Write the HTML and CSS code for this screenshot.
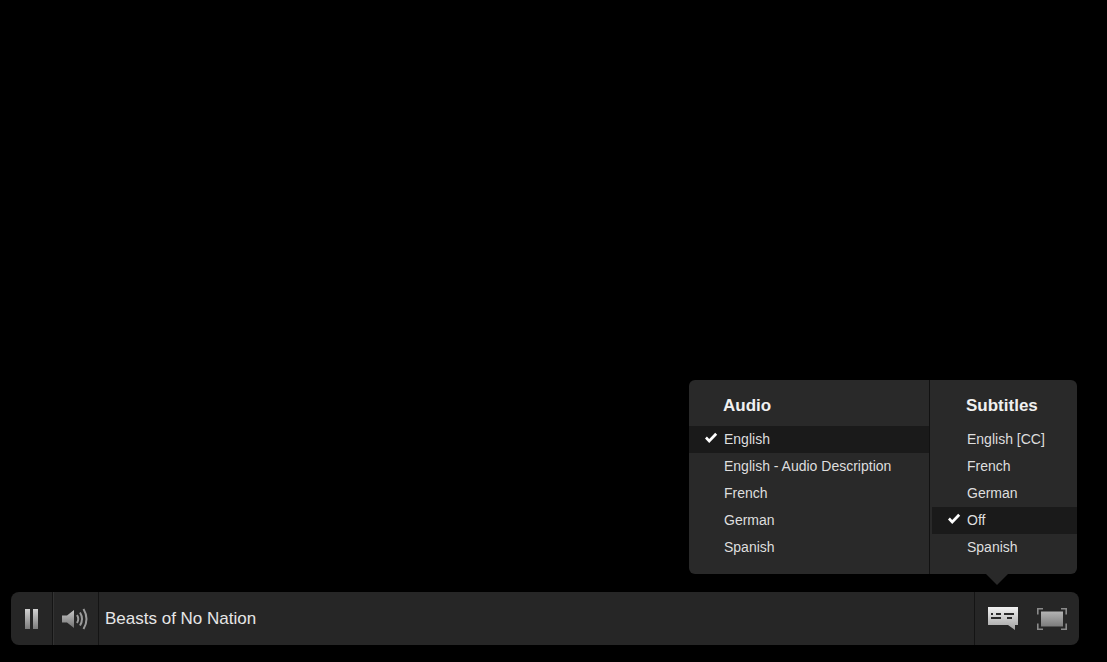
FILE: index.html
```html
<!DOCTYPE html>
<html lang="en">
<head>
<meta charset="utf-8">
<title>Beasts of No Nation</title>
<link rel="stylesheet" href="styles.css">
</head>
<body>
<div class="player">
  <div class="popover">
    <section class="panel panel-audio">
      <h2 class="panel-title">Audio</h2>
      <ul class="list">
        <li class="item selected"><svg class="check" viewBox="0 0 14 12"><path d="M1 6.5 L2.9 4.6 L5.2 6.9 L11.2 .8 L13.2 2.8 L5.2 11 Z"/></svg>English</li>
        <li class="item">English - Audio Description</li>
        <li class="item">French</li>
        <li class="item">German</li>
        <li class="item">Spanish</li>
      </ul>
    </section>
    <section class="panel panel-subs">
      <h2 class="panel-title">Subtitles</h2>
      <ul class="list">
        <li class="item">English [CC]</li>
        <li class="item">French</li>
        <li class="item">German</li>
        <li class="item selected"><svg class="check" viewBox="0 0 14 12"><path d="M1 6.5 L2.9 4.6 L5.2 6.9 L11.2 .8 L13.2 2.8 L5.2 11 Z"/></svg>Off</li>
        <li class="item">Spanish</li>
      </ul>
    </section>
    <div class="arrow"></div>
  </div>
  <div class="bar">
    <button class="ctrl ctrl-pause" aria-label="Pause">
      <svg width="16" height="22" viewBox="0 0 16 22">
        <defs><linearGradient id="g1" x1="0" y1="0" x2="0" y2="1"><stop offset="0" stop-color="#d2d2d2"/><stop offset="1" stop-color="#7c7c7c"/></linearGradient></defs>
        <rect x="1" y="1" width="5" height="20" fill="url(#g1)"/>
        <rect x="9" y="1" width="5" height="20" fill="url(#g1)"/>
      </svg>
    </button>
    <button class="ctrl ctrl-volume" aria-label="Volume">
      <svg width="28" height="24" viewBox="0 0 28 24">
        <defs><linearGradient id="g2" x1="0" y1="0" x2="0" y2="1"><stop offset="0" stop-color="#c8c8c8"/><stop offset="1" stop-color="#707070"/></linearGradient></defs>
        <path d="M0 8.5 H5 L12 3 V21 L5 15.5 H0 Z" fill="url(#g2)"/>
        <g fill="none" stroke="#9a9a9a" stroke-width="2">
          <path d="M15 8 Q17.5 12 15 16"/>
          <path d="M18 5.5 Q22 12 18 18.5"/>
          <path d="M21.5 2 Q27.5 12 21.5 22"/>
        </g>
      </svg>
    </button>
    <div class="title">Beasts of No Nation</div>
    <button class="ctrl ctrl-subs" aria-label="Audio and subtitles">
      <svg width="32" height="24" viewBox="0 0 32 24">
        <defs><linearGradient id="g3" x1="0" y1="0" x2="0" y2="1"><stop offset="0" stop-color="#f2f2f2"/><stop offset="1" stop-color="#a0a0a0"/></linearGradient></defs>
        <path d="M1 0 H31 V18 H28 V23 L21 18 H1 Z" fill="url(#g3)"/>
        <g fill="#2a2a2a">
          <rect x="4" y="10" width="10" height="2"/>
          <rect x="9" y="6" width="5" height="2"/>
          <rect x="4" y="6" width="2" height="2"/>
          <rect x="17" y="6" width="10" height="2"/>
          <rect x="20" y="10" width="5" height="2"/>
        </g>
      </svg>
    </button>
    <button class="ctrl ctrl-full" aria-label="Fullscreen">
      <svg width="30" height="22" viewBox="0 0 30 22">
        <defs><linearGradient id="g4" x1="0" y1="0" x2="0" y2="1"><stop offset="0" stop-color="#b4b4b4"/><stop offset="1" stop-color="#7c7c7c"/></linearGradient></defs>
        <rect x="4" y="3.5" width="22" height="15" fill="url(#g4)"/>
        <g fill="none" stroke="#8a8a8a" stroke-width="1.6">
          <path d="M.8 6.5 V.8 H6"/>
          <path d="M24 .8 H29.2 V6.5"/>
          <path d="M.8 15.5 V21.2 H6"/>
          <path d="M24 21.2 H29.2 V15.5"/>
        </g>
      </svg>
    </button>
  </div>
</div>
</body>
</html>
```
FILE: styles.css
```css
html, body {
  margin: 0;
  height: 100%;
  background: #000;
}
body {
  display: flex;
  flex-direction: column;
  justify-content: flex-end;
  padding: 0 28px 17px 11px;
  box-sizing: border-box;
  font-family: "Liberation Sans", Arial, sans-serif;
  overflow: hidden;
}
.player {
  position: relative;
}
.bar {
  display: flex;
  align-items: stretch;
  height: 53px;
  background: #262626;
  border-radius: 8px;
  overflow: hidden;
}
.ctrl {
  display: flex;
  align-items: center;
  justify-content: center;
  padding: 0;
  border: 0;
  background: transparent;
  flex: none;
}
.ctrl-pause {
  width: 42px;
  border-right: 1px solid #141414;
  box-shadow: 1px 0 0 #333;
}
.ctrl-volume {
  width: 45px;
  margin-left: 1px;
  border-right: 1px solid #141414;
}
.ctrl-subs {
  width: 57px;
  padding-top: 1px;
  border-left: 1px solid #141414;
}
.ctrl-full {
  width: 48px;
  padding: 0 6px 0 0;
}
.title {
  flex: 1;
  align-self: center;
  padding-left: 6px;
  color: #e6e6e6;
  font-size: 17px;
}
.popover {
  position: absolute;
  right: 2px;
  bottom: 71px;
  display: flex;
  height: 194px;
  background: #292929;
  border-radius: 6px;
}
.panel {
  box-sizing: border-box;
  flex: none;
}
.panel-audio {
  width: 240px;
  border-radius: 6px 0 0 6px;
}
.panel-subs {
  width: 148px;
  padding-left: 2px;
  border-left: 1px solid #111;
  margin-left: 0;
}
.panel-title {
  margin: 0;
  padding-left: 34px;
  height: 46px;
  line-height: 52px;
  color: #f0f0f0;
  font-size: 17px;
  font-weight: 700;
}
.list {
  margin: 0;
  padding: 0;
  list-style: none;
}
.item {
  position: relative;
  height: 27px;
  line-height: 27px;
  padding-left: 35px;
  color: #dedede;
  font-size: 14px;
  white-space: nowrap;
}
.selected {
  background: #1a1a1a;
}
.check {
  position: absolute;
  left: 15px;
  top: 6px;
  width: 14px;
  height: 12px;
  fill: #fff;
}
.arrow {
  position: absolute;
  left: 297px;
  top: 100%;
  width: 0;
  height: 0;
  border-left: 11px solid transparent;
  border-right: 11px solid transparent;
  border-top: 11px solid #292929;
}
```
